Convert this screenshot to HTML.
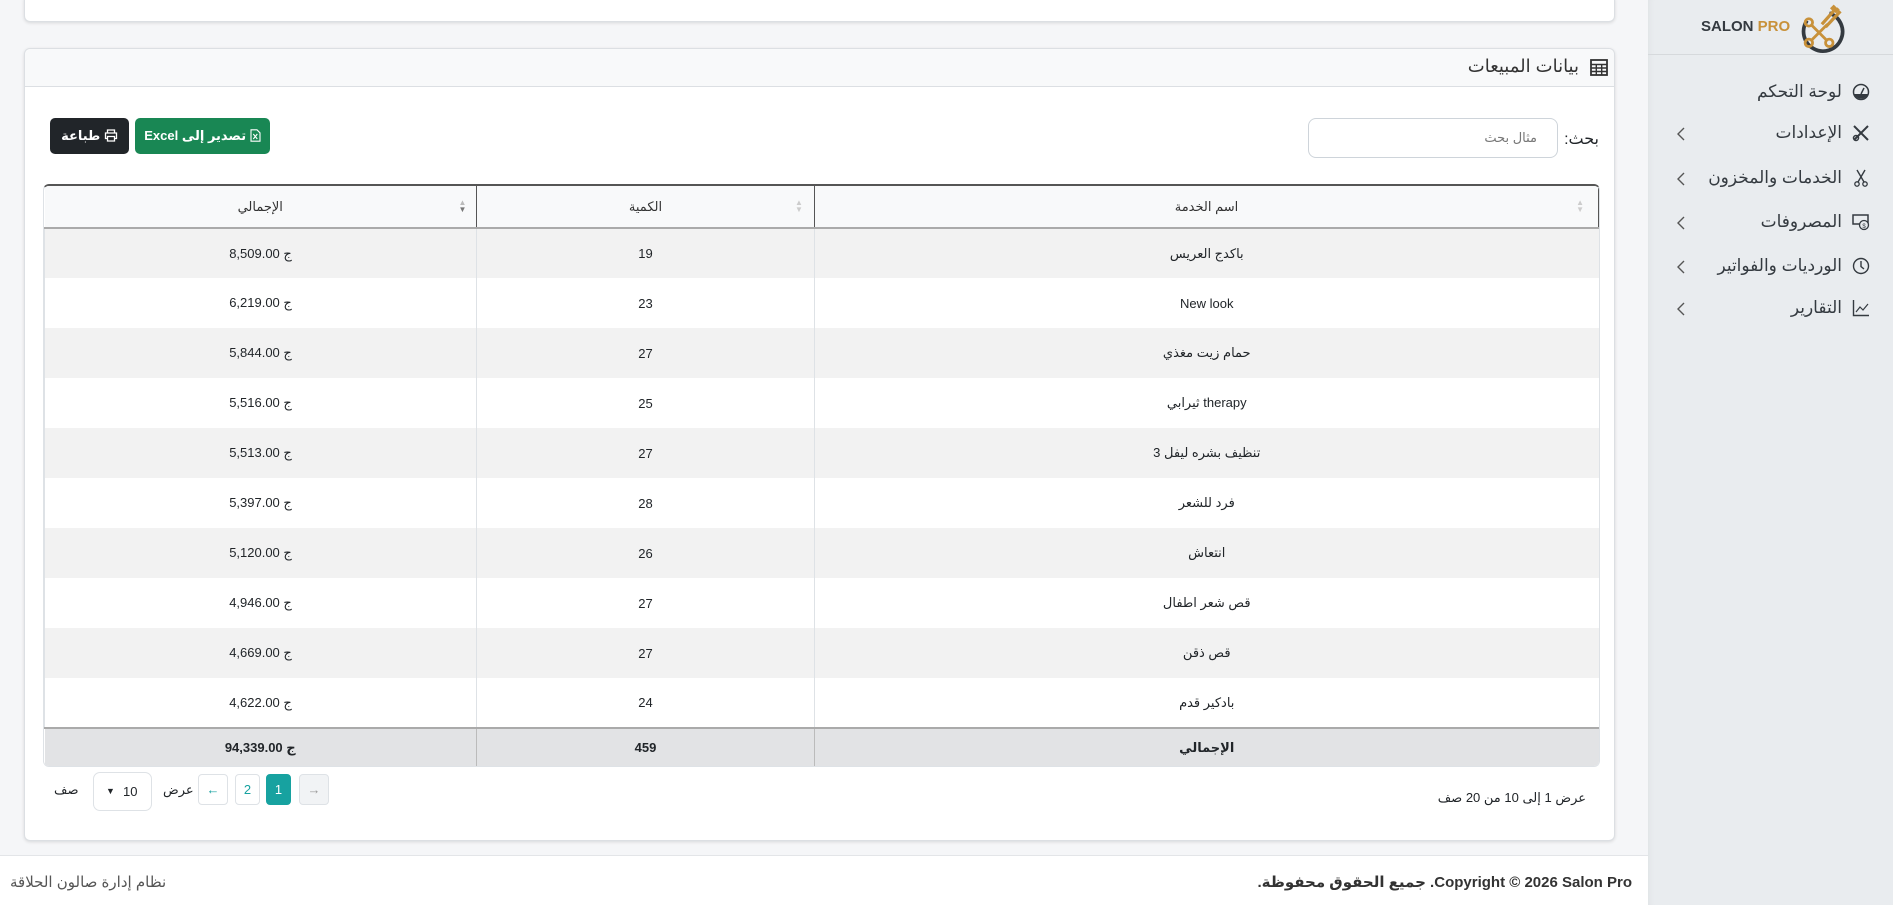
<!DOCTYPE html>
<html lang="ar" dir="rtl"><head><meta charset="utf-8">
<style>
*{box-sizing:border-box;margin:0;padding:0}
body{width:1893px;height:905px;overflow:hidden;background:#f5f6f8;font-family:"Liberation Sans","DejaVu Sans","Noto Sans CJK SC",sans-serif;color:#212529;position:relative}
.abs{position:absolute}
.card{position:absolute;background:#fff;border:1px solid #dcdfe3;border-radius:6px;box-shadow:0 1px 3px rgba(0,0,0,.12)}
#side{left:1648px;top:0;width:245px;height:905px;background:#e9ecef;box-shadow:inset 6px 0 8px -6px rgba(0,0,0,.06)}
.mi{position:absolute;right:0;width:245px;height:30px;font-size:17px;color:#343a40;direction:rtl}
.mi .t{position:absolute;right:51px;top:4px;white-space:nowrap}
.mi .ic{position:absolute;right:23px;top:5px;width:18px;height:18px}
.mi .ch{position:absolute;left:28px;top:7px;width:10px;height:16px}
table{border-collapse:collapse;width:100%;font-size:13px;direction:ltr}
td,th{text-align:center;height:50px;font-weight:normal}
th{height:42px;background:#f8f9fa;color:#333}
tbody tr:nth-child(odd){background:#f2f2f2}
tbody tr:nth-child(even){background:#fff}
td{border-left:1px solid #dee2e6}
tfoot td{font-weight:bold}
.pb{position:absolute;top:774px;height:31px;border:1px solid #dee2e6;border-radius:4px;font-size:13px;text-align:center;line-height:29px;background:#fff;color:#17a2a0}
</style></head><body>

<div class="card" style="left:24px;top:-6px;width:1591px;height:28px;"></div>

<div class="card" style="left:24px;top:48px;width:1591px;height:793px;">
  <div class="abs" style="left:0;top:0;width:100%;height:38px;background:#f8f9fa;border-bottom:1px solid #dcdfe3;border-radius:6px 6px 0 0"></div>
  <svg class="abs" style="right:6px;top:10px" width="18" height="17" viewBox="0 0 18 17"><rect x="1" y="1" width="16" height="15" fill="none" stroke="#333" stroke-width="1.8"/><path d="M1 5.5H17M1 9H17M1 12.5H17M6.3 5.5V16M11.7 5.5V16" stroke="#333" stroke-width="1.4"/></svg>
  <div class="abs" style="right:35px;top:7px;font-size:18px;color:#333">بيانات المبيعات</div>

  <div class="abs" style="right:15px;top:80px;font-size:16px">بحث:</div>
  <div class="abs" style="left:1283px;top:69px;width:250px;height:40px;border:1px solid #ced4da;border-radius:8px;font-size:13px;color:#777;padding:11px 20px 0 0">مثال بحث</div>

  <div class="abs" style="left:110px;top:69px;width:135px;height:36px;background:#198754;border-radius:5px;color:#fff;font-size:13px;font-weight:bold;text-align:center;line-height:35px">
    <svg width="11" height="13" viewBox="0 0 11 13" style="vertical-align:-2px"><path d="M1 .8H7L10 3.8V12.2H1Z" fill="none" stroke="#fff" stroke-width="1.1"/><path d="M3.3 5L7.3 10M7.3 5L3.3 10" stroke="#fff" stroke-width="1.1"/></svg> تصدير إلى Excel</div>
  <div class="abs" style="left:25px;top:69px;width:79px;height:36px;background:#212529;border-radius:5px;color:#fff;font-size:13px;font-weight:bold;text-align:center;line-height:35px">
    <svg width="14" height="13" viewBox="0 0 14 13" style="vertical-align:-2px"><path d="M3.5 4V1H10.5V4M3.5 9.5H1.5V4H12.5V9.5H10.5M3.5 7.5H10.5V12H3.5Z" fill="none" stroke="#fff" stroke-width="1.3"/></svg> طباعة</div>

  <div class="abs" style="left:18px;top:135px;width:1557px;border:1px solid #dee2e6;border-top:2px solid #555;border-radius:6px;overflow:hidden">
    <table dir="ltr">
      <thead><tr>
        <th style="width:432px;border-right:1px solid #555;border-bottom:2px solid #aaa;position:relative">الإجمالي<span class="abs" style="left:414px;top:13px;font-size:8px;line-height:7px;color:#bbb">▲<br><span style="color:#777">▼</span></span></th>
        <th style="width:338px;border-right:1px solid #555;border-bottom:2px solid #aaa;position:relative">الكمية<span class="abs" style="left:318px;top:13px;font-size:8px;line-height:7px;color:#ccc">▲<br>▼</span></th>
        <th style="border-bottom:2px solid #aaa;position:relative;border-right:1px solid #555">اسم الخدمة<span class="abs" style="right:14px;top:13px;font-size:8px;line-height:7px;color:#ccc">▲<br>▼</span></th>
      </tr></thead>
      <tbody>
        <tr><td>8,509.00 ج</td><td>19</td><td>باكدج العريس</td></tr>
        <tr><td>6,219.00 ج</td><td>23</td><td>New look</td></tr>
        <tr><td>5,844.00 ج</td><td>27</td><td>حمام زيت مغذي</td></tr>
        <tr><td>5,516.00 ج</td><td>25</td><td>ثيرابي therapy</td></tr>
        <tr><td>5,513.00 ج</td><td>27</td><td>تنظيف بشره ليفل 3</td></tr>
        <tr><td>5,397.00 ج</td><td>28</td><td>فرد للشعر</td></tr>
        <tr><td>5,120.00 ج</td><td>26</td><td>انتعاش</td></tr>
        <tr><td>4,946.00 ج</td><td>27</td><td>قص شعر اطفال</td></tr>
        <tr><td>4,669.00 ج</td><td>27</td><td>قص ذقن</td></tr>
        <tr><td>4,622.00 ج</td><td>24</td><td>بادكير قدم</td></tr>
      </tbody>
      <tfoot><tr style="background:#e2e3e5">
        <td style="height:38px;border-top:2px solid #aaa;border-right:1px solid #bbb;border-left:none">94,339.00 ج</td>
        <td style="height:38px;border-top:2px solid #aaa;border-right:1px solid #bbb;border-left:none">459</td>
        <td style="height:38px;border-top:2px solid #aaa;border-left:none">الإجمالي</td>
      </tr></tfoot>
    </table>
  </div>
</div>

<div class="abs" style="right:307px;top:790px;font-size:13px">عرض 1 إلى 10 من 20 صف</div>
<div class="pb" style="left:299px;width:30px;background:#f1f3f5;color:#999">→</div>
<div class="pb" style="left:266px;width:25px;background:#17a2a0;border-color:#17a2a0;color:#fff">1</div>
<div class="pb" style="left:235px;width:25px">2</div>
<div class="pb" style="left:198px;width:30px">←</div>
<div class="abs" style="left:163px;top:782px;font-size:13px">عرض</div>
<div class="abs" style="left:93px;top:772px;width:59px;height:39px;border:1px solid #dee2e6;border-radius:7px;font-size:13px;line-height:37px;background:#fff"><span class="abs" style="left:29px">10</span><span class="abs" style="left:12px;font-size:9px">▼</span></div>
<div class="abs" style="left:54px;top:782px;font-size:13px">صف</div>

<div class="abs" style="left:0;top:855px;width:1648px;height:50px;background:#fff;border-top:1px solid #e3e5e8"></div>
<div class="abs" style="left:10px;top:873px;font-size:15px;color:#555">نظام إدارة صالون الحلاقة</div>
<div class="abs" style="right:261px;top:873px;font-size:15px;color:#333;font-weight:600">Copyright © 2026 Salon Pro. جميع الحقوق محفوظة.</div>

<div id="side" class="abs">
  <div class="abs" style="left:0;top:54px;width:245px;border-top:1px solid #d6d9dc"></div>
  <div class="abs" style="left:53px;top:18px;font-size:15px;font-weight:bold;color:#343a40;direction:ltr;white-space:nowrap">SALON <span style="color:#c8913a">PRO</span></div>
  <svg class="abs" style="left:146px;top:2px" width="52" height="52" viewBox="0 0 56 52">
    <path d="M38 10A21 21 0 1 1 14 18" fill="none" stroke="#343a40" stroke-width="4"/>
    <path d="M30 22L46 4M34 25L50 8M40 6L44 2M44 9L48 5" stroke="#c8913a" stroke-width="3.5"/>
    <path d="M18 22L36 40M36 22L18 40" stroke="#c8913a" stroke-width="3"/>
    <circle cx="16" cy="20" r="4" fill="none" stroke="#c8913a" stroke-width="3"/>
    <circle cx="16" cy="42" r="4" fill="none" stroke="#c8913a" stroke-width="3"/>
    <circle cx="38" cy="42" r="4" fill="none" stroke="#c8913a" stroke-width="3"/>
  </svg>

  <div class="mi" style="top:78px"><span class="t">لوحة التحكم</span>
    <svg class="ic" viewBox="0 0 18 18"><circle cx="9" cy="9" r="7.5" fill="none" stroke="#343a40" stroke-width="1.5"/><path d="M2 11H16A7.5 7.5 0 0 1 2 11Z" fill="#343a40"/><path d="M9 11L12 5" stroke="#343a40" stroke-width="1.5"/></svg></div>
  <div class="mi" style="top:119px"><span class="t">الإعدادات</span>
    <svg class="ic" viewBox="0 0 18 18"><path d="M2 2L16 16M16 2L2 16" stroke="#343a40" stroke-width="2"/><circle cx="4" cy="14" r="2.5" fill="none" stroke="#343a40" stroke-width="1.5"/></svg>
    <svg class="ch" viewBox="0 0 10 16"><path d="M8 2L2 8L8 14" fill="none" stroke="#555" stroke-width="1.4"/></svg></div>
  <div class="mi" style="top:164px"><span class="t">الخدمات والمخزون</span>
    <svg class="ic" viewBox="0 0 18 18"><path d="M5 1L12 13M13 1L6 13" stroke="#343a40" stroke-width="1.4"/><circle cx="5" cy="15" r="2.2" fill="none" stroke="#343a40" stroke-width="1.3"/><circle cx="13" cy="15" r="2.2" fill="none" stroke="#343a40" stroke-width="1.3"/></svg>
    <svg class="ch" viewBox="0 0 10 16"><path d="M8 2L2 8L8 14" fill="none" stroke="#555" stroke-width="1.4"/></svg></div>
  <div class="mi" style="top:208px"><span class="t">المصروفات</span>
    <svg class="ic" viewBox="0 0 18 18"><rect x="1" y="2" width="15" height="9" fill="none" stroke="#343a40" stroke-width="1.5"/><circle cx="12" cy="12" r="4.5" fill="#e9ecef" stroke="#343a40" stroke-width="1.3"/><text x="12" y="15" font-size="6" text-anchor="middle" fill="#343a40">$</text></svg>
    <svg class="ch" viewBox="0 0 10 16"><path d="M8 2L2 8L8 14" fill="none" stroke="#555" stroke-width="1.4"/></svg></div>
  <div class="mi" style="top:252px"><span class="t">الورديات والفواتير</span>
    <svg class="ic" viewBox="0 0 18 18"><circle cx="9" cy="9" r="7.5" fill="none" stroke="#343a40" stroke-width="1.4"/><path d="M9 4V9.5L12 12" fill="none" stroke="#343a40" stroke-width="1.4"/></svg>
    <svg class="ch" viewBox="0 0 10 16"><path d="M8 2L2 8L8 14" fill="none" stroke="#555" stroke-width="1.4"/></svg></div>
  <div class="mi" style="top:294px"><span class="t">التقارير</span>
    <svg class="ic" viewBox="0 0 18 18"><path d="M1.5 1V16.5H17" fill="none" stroke="#343a40" stroke-width="1.4"/><path d="M4 13L8 8L11 11L16 5" fill="none" stroke="#343a40" stroke-width="1.2"/></svg>
    <svg class="ch" viewBox="0 0 10 16"><path d="M8 2L2 8L8 14" fill="none" stroke="#555" stroke-width="1.4"/></svg></div>
</div>
</body></html>
